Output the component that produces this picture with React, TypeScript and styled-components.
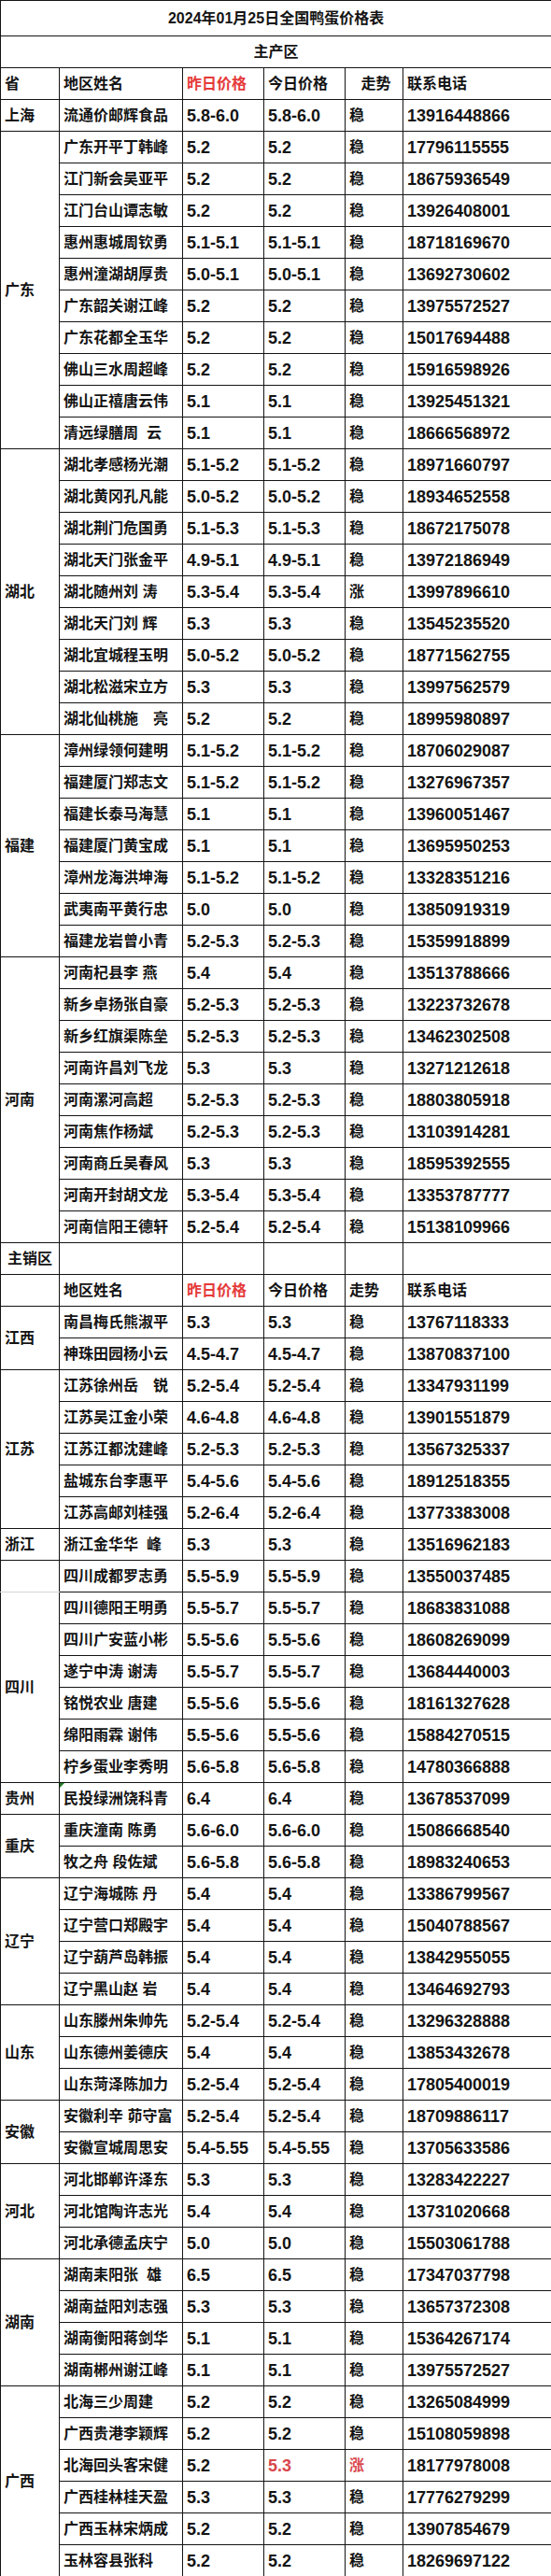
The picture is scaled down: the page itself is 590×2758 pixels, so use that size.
import React from "react";
import styled, { createGlobalStyle, css } from "styled-components";

type Row = { n: string; y: string; t: string; tr?: string; p: string; hot?: boolean; mark?: boolean };
type Group = { prov: string; rows: Row[]; faint?: boolean };

const r = (n: string, y: string, p: string, extra: Partial<Row> = {}): Row => ({ n, y, t: y, p, ...extra });

const producing: Group[] = [
  { prov: "上海", rows: [r("流通价邮辉食品", "5.8-6.0", "13916448866")] },
  {
    prov: "广东",
    rows: [
      r("广东开平丁韩峰", "5.2", "17796115555"),
      r("江门新会吴亚平", "5.2", "18675936549"),
      r("江门台山谭志敏", "5.2", "13926408001"),
      r("惠州惠城周钦勇", "5.1-5.1", "18718169670"),
      r("惠州潼湖胡厚贵", "5.0-5.1", "13692730602"),
      r("广东韶关谢江峰", "5.2", "13975572527"),
      r("广东花都全玉华", "5.2", "15017694488"),
      r("佛山三水周超峰", "5.2", "15916598926"),
      r("佛山正禧唐云伟", "5.1", "13925451321"),
      r("清远绿膳周  云", "5.1", "18666568972"),
    ],
  },
  {
    prov: "湖北",
    rows: [
      r("湖北孝感杨光潮", "5.1-5.2", "18971660797"),
      r("湖北黄冈孔凡能", "5.0-5.2", "18934652558"),
      r("湖北荆门危国勇", "5.1-5.3", "18672175078"),
      r("湖北天门张金平", "4.9-5.1", "13972186949"),
      r("湖北随州刘 涛", "5.3-5.4", "13997896610", { tr: "涨" }),
      r("湖北天门刘 辉", "5.3", "13545235520"),
      r("湖北宜城程玉明", "5.0-5.2", "18771562755"),
      r("湖北松滋宋立方", "5.3", "13997562579"),
      r("湖北仙桃施　亮", "5.2", "18995980897"),
    ],
  },
  {
    prov: "福建",
    rows: [
      r("漳州绿领何建明", "5.1-5.2", "18706029087"),
      r("福建厦门郑志文", "5.1-5.2", "13276967357"),
      r("福建长泰马海慧", "5.1", "13960051467"),
      r("福建厦门黄宝成", "5.1", "13695950253"),
      r("漳州龙海洪坤海", "5.1-5.2", "13328351216"),
      r("武夷南平黄行忠", "5.0", "13850919319"),
      r("福建龙岩曾小青", "5.2-5.3", "15359918899"),
    ],
  },
  {
    prov: "河南",
    rows: [
      r("河南杞县李 燕", "5.4", "13513788666"),
      r("新乡卓扬张自豪", "5.2-5.3", "13223732678"),
      r("新乡红旗渠陈垒", "5.2-5.3", "13462302508"),
      r("河南许昌刘飞龙", "5.3", "13271212618"),
      r("河南漯河高超", "5.2-5.3", "18803805918"),
      r("河南焦作杨斌", "5.2-5.3", "13103914281"),
      r("河南商丘吴春风", "5.3", "18595392555"),
      r("河南开封胡文龙", "5.3-5.4", "13353787777"),
      r("河南信阳王德轩", "5.2-5.4", "15138109966"),
    ],
  },
];

const selling: Group[] = [
  {
    prov: "江西",
    rows: [r("南昌梅氏熊淑平", "5.3", "13767118333"), r("神珠田园杨小云", "4.5-4.7", "13870837100")],
  },
  {
    prov: "江苏",
    rows: [
      r("江苏徐州岳　锐", "5.2-5.4", "13347931199"),
      r("江苏吴江金小荣", "4.6-4.8", "13901551879"),
      r("江苏江都沈建峰", "5.2-5.3", "13567325337"),
      r("盐城东台李惠平", "5.4-5.6", "18912518355"),
      r("江苏高邮刘桂强", "5.2-6.4", "13773383008"),
    ],
  },
  { prov: "浙江", rows: [r("浙江金华华  峰", "5.3", "13516962183")] },
  { prov: "", faint: true, rows: [r("四川成都罗志勇", "5.5-5.9", "13550037485")] },
  {
    prov: "四川",
    rows: [
      r("四川德阳王明勇", "5.5-5.7", "18683831088"),
      r("四川广安蓝小彬", "5.5-5.6", "18608269099"),
      r("遂宁中涛 谢涛", "5.5-5.7", "13684440003"),
      r("铭悦农业 唐建", "5.5-5.6", "18161327628"),
      r("绵阳雨霖 谢伟", "5.5-5.6", "15884270515"),
      r("柠乡蛋业李秀明", "5.6-5.8", "14780366888"),
    ],
  },
  { prov: "贵州", rows: [r("民投绿洲饶科青", "6.4", "13678537099", { mark: true })] },
  {
    prov: "重庆",
    rows: [r("重庆潼南 陈勇", "5.6-6.0", "15086668540"), r("牧之舟 段佐斌", "5.6-5.8", "18983240653")],
  },
  {
    prov: "辽宁",
    rows: [
      r("辽宁海城陈 丹", "5.4", "13386799567"),
      r("辽宁营口郑殿宇", "5.4", "15040788567"),
      r("辽宁葫芦岛韩振", "5.4", "13842955055"),
      r("辽宁黑山赵 岩", "5.4", "13464692793"),
    ],
  },
  {
    prov: "山东",
    rows: [
      r("山东滕州朱帅先", "5.2-5.4", "13296328888"),
      r("山东德州姜德庆", "5.4", "13853432678"),
      r("山东菏泽陈加力", "5.2-5.4", "17805400019"),
    ],
  },
  {
    prov: "安徽",
    rows: [r("安徽利辛 茆守富", "5.2-5.4", "18709886117"), r("安徽宣城周思安", "5.4-5.55", "13705633586")],
  },
  {
    prov: "河北",
    rows: [
      r("河北邯郸许泽东", "5.3", "13283422227"),
      r("河北馆陶许志光", "5.4", "13731020668"),
      r("河北承德孟庆宁", "5.0", "15503061788"),
    ],
  },
  {
    prov: "湖南",
    rows: [
      r("湖南耒阳张  雄", "6.5", "17347037798"),
      r("湖南益阳刘志强", "5.3", "13657372308"),
      r("湖南衡阳蒋剑华", "5.1", "15364267174"),
      r("湖南郴州谢江峰", "5.1", "13975572527"),
    ],
  },
  {
    prov: "广西",
    rows: [
      r("北海三少周建", "5.2", "13265084999"),
      r("广西贵港李颖辉", "5.2", "15108059898"),
      { n: "北海回头客宋健", y: "5.2", t: "5.3", tr: "涨", p: "18177978008", hot: true },
      r("广西桂林桂天盈", "5.3", "17776279299"),
      r("广西玉林宋炳成", "5.2", "13907854679"),
      r("玉林容县张科", "5.2", "18269697122"),
    ],
  },
];

const GlobalStyle = createGlobalStyle`
  html, body { margin: 0; padding: 0; background: #fff; }
  body { font-family: "Liberation Sans", "Noto Sans CJK SC", sans-serif; color: #141414; }
`;

const Sheet = styled.table`
  width: 590px;
  border-collapse: collapse;
  table-layout: fixed;
  border: 1px solid #141414;
`;

const Line = styled.tr<{ $tall?: boolean }>`
  height: ${(p) => (p.$tall ? 38 : 34)}px;
`;

const Cell = styled.td<{
  $num?: boolean;
  $red?: boolean;
  $hot?: boolean;
  $center?: boolean;
  $faint?: boolean;
  $mark?: boolean;
}>`
  position: relative;
  padding: 0 0 0 4px;
  border: 1px solid #141414;
  vertical-align: middle;
  white-space: pre;
  overflow: hidden;
  font-weight: 700;
  font-size: ${(p) => (p.$num ? 18 : 16)}px;
  line-height: 1;
  color: ${(p) => (p.$red ? "#e53a3a" : p.$hot ? "#d9484c" : "#141414")};
  text-align: ${(p) => (p.$center ? "center" : "left")};
  ${(p) => p.$faint && css`border-bottom-color: #d6d6d6;`}
  ${(p) =>
    p.$mark &&
    css`
      &::before {
        content: "";
        position: absolute;
        left: 0;
        top: 0;
        border-top: 5px solid #1f7a1f;
        border-right: 5px solid transparent;
      }
    `}
`;

const Banner = styled(Cell)`
  padding: 0;
  text-align: center;
`;

function DataRows({ groups }: { groups: Group[] }) {
  return (
    <>
      {groups.map((g) =>
        g.rows.map((row, i) => (
          <Line key={row.n}>
            {i === 0 && (
              <Cell rowSpan={g.rows.length} $faint={g.faint}>
                {g.prov}
              </Cell>
            )}
            <Cell $mark={row.mark}>{row.n}</Cell>
            <Cell $num>{row.y}</Cell>
            <Cell $num $hot={row.hot}>{row.t}</Cell>
            <Cell $hot={row.hot}>{row.tr ?? "稳"}</Cell>
            <Cell $num>{row.p}</Cell>
          </Line>
        ))
      )}
    </>
  );
}

function Header({ first, trendCentered }: { first: string; trendCentered?: boolean }) {
  return (
    <Line>
      <Cell>{first}</Cell>
      <Cell>地区姓名</Cell>
      <Cell $red>昨日价格</Cell>
      <Cell>今日价格</Cell>
      <Cell $center={trendCentered}>走势</Cell>
      <Cell>联系电话</Cell>
    </Line>
  );
}

export default function App() {
  return (
    <>
      <GlobalStyle />
      <Sheet>
        <colgroup>
          <col style={{ width: 63 }} />
          <col style={{ width: 132 }} />
          <col style={{ width: 87 }} />
          <col style={{ width: 87 }} />
          <col style={{ width: 62 }} />
          <col style={{ width: 159 }} />
        </colgroup>
        <tbody>
          <Line $tall>
            <Banner colSpan={6}>2024年01月25日全国鸭蛋价格表</Banner>
          </Line>
          <Line>
            <Banner colSpan={6}>主产区</Banner>
          </Line>
          <Header first="省" trendCentered />
          <DataRows groups={producing} />
          <Line>
            <Banner>主销区</Banner>
            <Cell />
            <Cell />
            <Cell />
            <Cell />
            <Cell />
          </Line>
          <Header first="" />
          <DataRows groups={selling} />
        </tbody>
      </Sheet>
    </>
  );
}
